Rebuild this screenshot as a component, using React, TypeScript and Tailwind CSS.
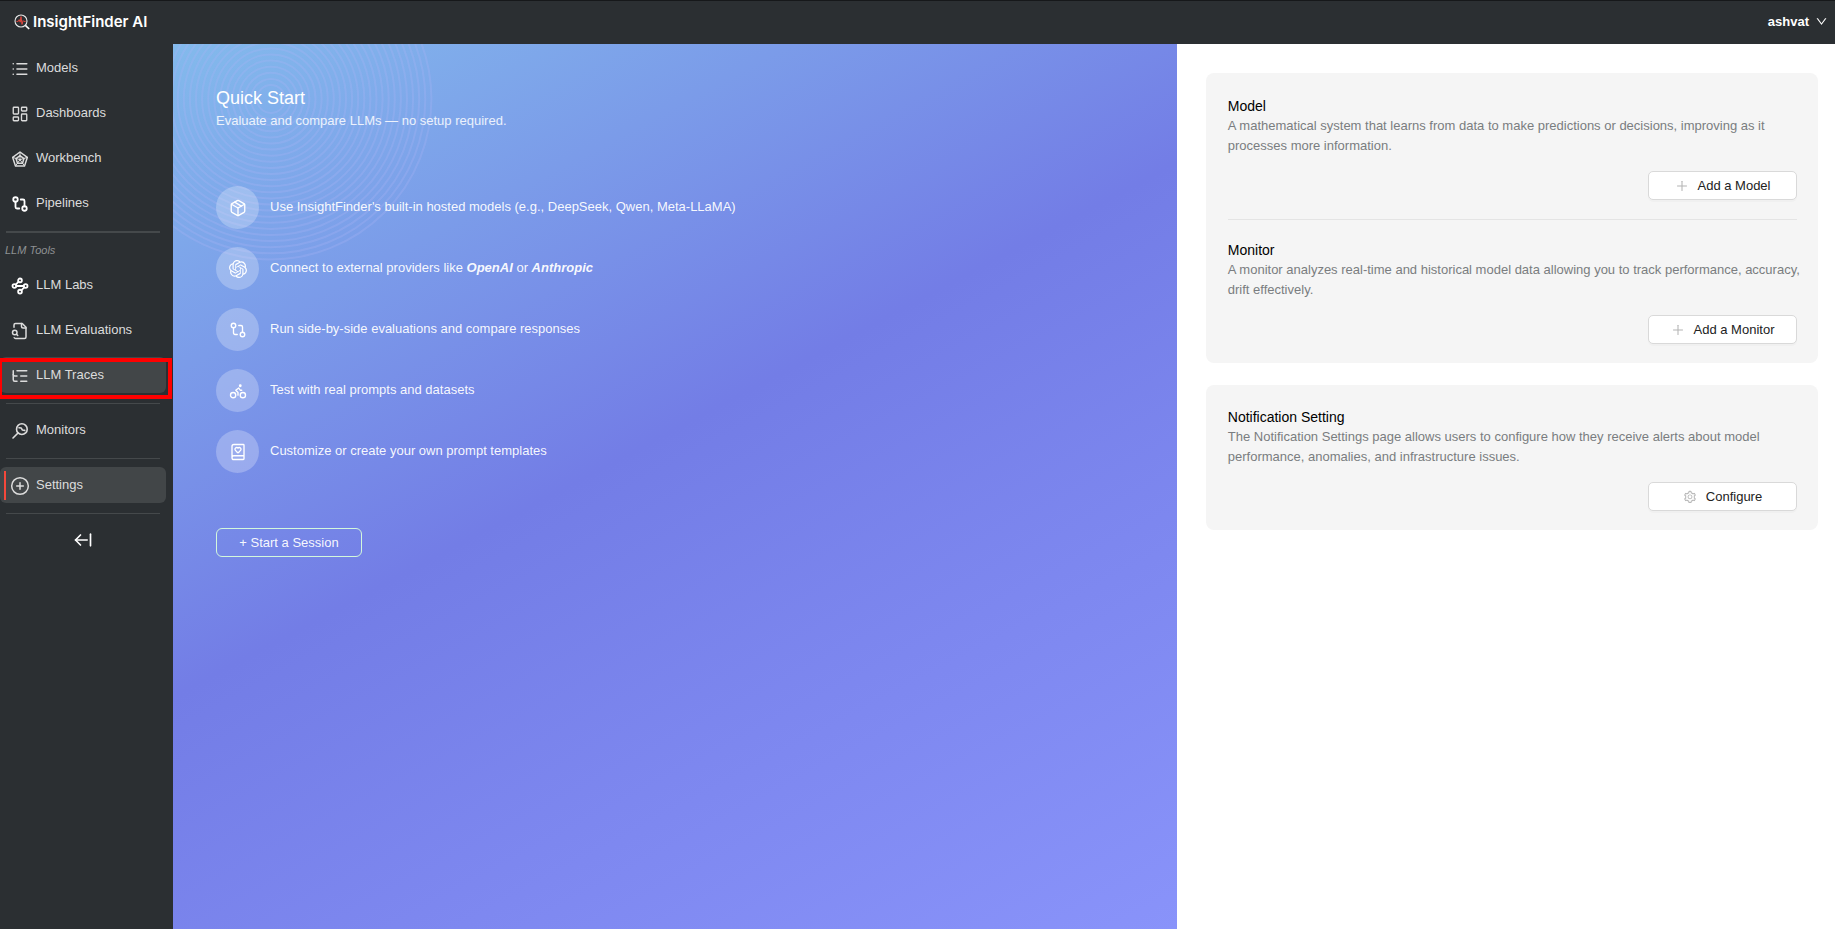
import React from "react";
import clsx from "clsx";
import {
  ArrowLeftFromLine,
  Bike,
  BookHeart,
  CirclePlus,
  GitCompare,
  LayoutDashboard,
  List,
  ListTree,
  Package,
  Waypoints,
} from "lucide-react";
import { AiOutlineDown, AiOutlinePlus, AiOutlineSetting } from "react-icons/ai";
import { SiOpenai } from "react-icons/si";

const LogoMark = () => (
  <svg viewBox="0 0 16 16" className="w-4 h-4" fill="none">
    <circle cx="7" cy="7" r="6" stroke="#e8e8e8" strokeWidth="1.1" />
    <path d="M11.4 11.4L15.2 15" stroke="#ffffff" strokeWidth="1.6" />
    <path
      d="M2.4 7.4h1.8l1-1.8 1 2.6L7 2.6l1 7.8 1.1-3.8.8.8h1.8"
      stroke="#f04a3e"
      strokeWidth="0.9"
      strokeLinejoin="round"
    />
  </svg>
);

const RadarIcon = () => (
  <svg
    viewBox="0 0 24 24"
    className="w-4 h-4"
    fill="none"
    stroke="currentColor"
    strokeWidth="2.2"
    strokeLinejoin="round"
  >
    <path d="M12 1.5L23 9.6 18.8 22.5H5.2L1 9.6z" />
    <path d="M12 7l6 4.4-2.3 7.1H8.3L6 11.4z" />
    <path d="M12 1.5V13M23 9.6L12 13M18.8 22.5L12 13M5.2 22.5L12 13M1 9.6L12 13" strokeWidth="1.5" />
  </svg>
);

const EvaluationIcon = () => (
  <svg
    viewBox="0 0 24 24"
    className="w-[18px] h-[18px]"
    fill="none"
    stroke="currentColor"
    strokeWidth="2"
    strokeLinecap="round"
    strokeLinejoin="round"
  >
    <path d="M14 2v4a2 2 0 0 0 2 2h4" />
    <path d="M4.3 21a2 2 0 0 0 1.7 1h12a2 2 0 0 0 2-2V7l-5-5H6a2 2 0 0 0-2 2v3" />
    <circle cx="5" cy="14" r="3" />
    <path d="M9 18l-1.5-1.5" />
  </svg>
);

const MonitorIcon = () => (
  <svg
    viewBox="0 0 24 24"
    className="w-4 h-4"
    fill="none"
    stroke="currentColor"
    strokeWidth="2.4"
    strokeLinecap="round"
    strokeLinejoin="round"
  >
    <circle cx="14.8" cy="9.2" r="8" />
    <path d="M9 15L1.5 22.5" />
    <path d="M10.5 7.2l3.4.4 1.8 3 3.4.4" />
  </svg>
);

type NavItemProps = {
  label: string;
  icon: React.ReactNode;
  active?: boolean;
  marked?: boolean;
  outlined?: boolean;
};

const NavItem: React.FC<NavItemProps> = ({
  label,
  icon,
  active,
  marked,
  outlined,
}) => (
  <li className="relative">
    <a
      href="#"
      className={clsx({
        "flex items-center h-9 mr-[7px] pl-[10px] gap-[6px] rounded-md text-[#dcdcdc]": true,
        "bg-[#424648]": active,
      })}
    >
      <span className="flex items-center justify-center w-5 h-5 mt-[2px]">
        {icon}
      </span>
      {label}
    </a>
    {marked && (
      <span className="absolute left-1 top-1 bottom-[3px] w-[2px] bg-[#f5483b]" />
    )}
    {outlined && (
      <span className="absolute -left-[2px] right-px top-px -bottom-[6px] border-4 border-[#ff0000]" />
    )}
  </li>
);

const Divider = () => <hr className="mt-[10px] mb-2 ml-[6px] mr-[13px] border-[#45494b]" />;

const Sidebar = () => (
  <nav className="w-[173px] shrink-0 pt-[6px] bg-[#2b2f32]">
    <ul className="flex flex-col gap-[9px]">
      <NavItem label="Models" icon={<List className="w-[18px] h-[18px]" strokeWidth={2.2} />} />
      <NavItem label="Dashboards" icon={<LayoutDashboard className="w-[18px] h-[18px]" strokeWidth={1.8} />} />
      <NavItem label="Workbench" icon={<RadarIcon />} />
      <NavItem label="Pipelines" icon={<GitCompare className="w-[18px] h-[18px] text-white" strokeWidth={2.4} />} />
    </ul>
    <hr className="mt-[10px] ml-[6px] mr-[13px] border-t-2 border-[#45494b]" />
    <p className="my-[9px] pl-[5px] text-[11px] leading-4 italic text-[#8e9192]">
      LLM Tools
    </p>
    <ul className="flex flex-col gap-[9px]">
      <NavItem label="LLM Labs" icon={<Waypoints className="w-[18px] h-[18px] text-white" strokeWidth={2.4} />} />
      <NavItem label="LLM Evaluations" icon={<EvaluationIcon />} />
      <NavItem
        label="LLM Traces"
        active
        outlined
        icon={<ListTree className="w-[18px] h-[18px]" strokeWidth={2} />}
      />
    </ul>
    <Divider />
    <ul>
      <NavItem label="Monitors" icon={<MonitorIcon />} />
    </ul>
    <Divider />
    <ul>
      <NavItem label="Settings" active marked icon={<CirclePlus className="w-5 h-5" strokeWidth={1.8} />} />
    </ul>
    <Divider />
    <button
      type="button"
      aria-label="Collapse menu"
      className="flex items-center justify-center w-[166px] h-9 mt-2 text-white"
    >
      <ArrowLeftFromLine className="w-5 h-5" strokeWidth={2} />
    </button>
  </nav>
);

// radii of the rings behind the quick start title
const rings = Array.from({ length: 25 }, (_, i) => 14 + i * 6.1);

const steps = [
  {
    id: 1,
    icon: <Package className="w-[18px] h-[18px]" strokeWidth={1.8} />,
    text: "Use InsightFinder's built-in hosted models (e.g., DeepSeek, Qwen, Meta-LLaMA)",
  },
  {
    id: 2,
    icon: <SiOpenai className="w-[18px] h-[18px]" />,
    text: (
      <>
        Connect to external providers like{" "}
        <strong className="italic">OpenAI</strong> or{" "}
        <strong className="italic">Anthropic</strong>
      </>
    ),
  },
  {
    id: 3,
    icon: <GitCompare className="w-[18px] h-[18px]" strokeWidth={1.8} />,
    text: "Run side-by-side evaluations and compare responses",
  },
  {
    id: 4,
    icon: <Bike className="w-[18px] h-[18px]" strokeWidth={1.8} />,
    text: "Test with real prompts and datasets",
  },
  {
    id: 5,
    icon: <BookHeart className="w-[18px] h-[18px]" strokeWidth={1.8} />,
    text: "Customize or create your own prompt templates",
  },
];

const QuickStart = () => (
  <section className="relative overflow-hidden px-[43px] pt-11 text-white bg-[linear-gradient(152deg,#83baec_0%,#737de6_46%,#8993fa_100%)]">
    <svg
      className="absolute left-0 top-0 w-[270px] h-[220px]"
      viewBox="0 0 270 220"
      fill="none"
      stroke="#a9b4f6"
      strokeOpacity="0.3"
      strokeWidth="2"
    >
      {rings.map((r) => (
        <circle key={r} cx="98" cy="55" r={r} />
      ))}
    </svg>
    <div className="relative">
      <h1 className="text-lg leading-5">Quick Start</h1>
      <p className="mt-[3px] leading-5 text-white/85">
        Evaluate and compare LLMs — no setup required.
      </p>
      <ul className="flex flex-col gap-[18px] mt-[55px]">
        {steps.map((step) => (
          <li key={step.id} className="flex items-center gap-[11px]">
            <span className="flex items-center justify-center w-[43px] h-[43px] rounded-full bg-white/25">
              {step.icon}
            </span>
            <span className="pb-[2px] leading-5 text-white/95">{step.text}</span>
          </li>
        ))}
      </ul>
      <button
        type="button"
        className="mt-[55px] w-[146px] h-[29px] rounded-md border border-[#d3f8dc] text-white/95"
      >
        + Start a Session
      </button>
    </div>
  </section>
);

type SetupBlockProps = {
  title: string;
  text: string;
  action: string;
  icon: React.ReactNode;
};

const SetupBlock: React.FC<SetupBlockProps> = ({ title, text, action, icon }) => (
  <div className="flex flex-col">
    <h2 className="text-sm leading-5 text-black">{title}</h2>
    <p className="-mr-2 leading-5 text-[#7a7d80]">{text}</p>
    <button
      type="button"
      className="flex items-center justify-center gap-[9px] self-end mt-[15px] w-[149px] h-[29px] rounded-[5px] border border-[#d9d9d9] bg-white text-[#222222] shadow-[0_2px_0_rgba(0,0,0,0.02)]"
    >
      <span className="text-[#b4b4b4]">{icon}</span>
      {action}
    </button>
  </div>
);

const SetupPanel = () => (
  <aside className="flex flex-col gap-[22px] pt-[29px] pl-[29px] pr-[17px] bg-white">
    <div className="pl-[22px] pr-[21px] pt-[23px] pb-[19px] rounded-lg bg-[#f5f5f5]">
      <SetupBlock
        title="Model"
        text="A mathematical system that learns from data to make predictions or decisions, improving as it processes more information."
        action="Add a Model"
        icon={<AiOutlinePlus className="w-[14px] h-[14px]" />}
      />
      <hr className="mt-[19px] mb-5 border-[#e4e4e4]" />
      <SetupBlock
        title="Monitor"
        text="A monitor analyzes real-time and historical model data allowing you to track performance, accuracy, drift effectively."
        action="Add a Monitor"
        icon={<AiOutlinePlus className="w-[14px] h-[14px]" />}
      />
    </div>
    <div className="pl-[22px] pr-[21px] pt-[22px] pb-[19px] rounded-lg bg-[#f5f5f5]">
      <SetupBlock
        title="Notification Setting"
        text="The Notification Settings page allows users to configure how they receive alerts about model performance, anomalies, and infrastructure issues."
        action="Configure"
        icon={<AiOutlineSetting className="w-[14px] h-[14px]" />}
      />
    </div>
  </aside>
);

const App: React.FC = () => {
  return (
    <div className="flex flex-col min-h-screen text-[13px] font-['Liberation_Sans',Arial,sans-serif]">
      <header className="flex items-center justify-between h-11 pb-[2px] pl-[14px] pr-[7px] border-t border-[#16181a] bg-[#2b2f32] text-white">
        <a href="#" className="flex items-center gap-[3px]">
          <LogoMark />
          <span className="text-[15px] leading-5 font-semibold font-['Inter',sans-serif]">
            InsightFinder AI
          </span>
        </a>
        <button type="button" className="flex items-center gap-[6px] font-bold">
          ashvat
          <AiOutlineDown className="w-[13px] h-[13px]" />
        </button>
      </header>
      <div className="flex grow">
        <Sidebar />
        <main className="grid grow grid-cols-[61fr_40fr]">
          <QuickStart />
          <SetupPanel />
        </main>
      </div>
    </div>
  );
};

export default App;
